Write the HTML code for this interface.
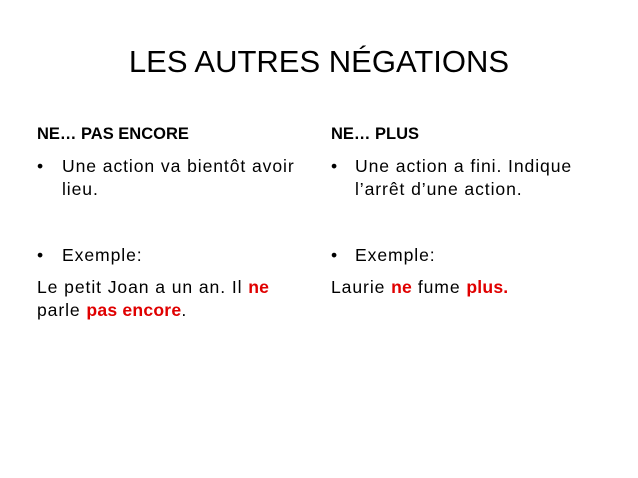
<!DOCTYPE html>
<html><head><meta charset="utf-8"><style>
body{margin:0;width:638px;height:478px;background:#fff;font-family:"Liberation Sans",sans-serif;color:#000;position:relative;overflow:hidden}
.t{position:absolute;left:0;width:638px;text-align:center;top:42px;font-size:31px;line-height:40px}
.a{position:absolute;font-size:17.6px;line-height:23px;white-space:nowrap;letter-spacing:0.9px}
.h{letter-spacing:0;font-size:16.5px}
.r{color:#e00000;font-weight:bold;letter-spacing:0.2px}
b{font-weight:bold}
</style></head><body>
<div class="t">LES AUTRES NÉGATIONS</div>
<div class="a h" style="left:37px;top:123px"><b>NE… PAS ENCORE</b></div>
<div class="a" style="left:37px;top:155px">•</div>
<div class="a" style="left:62px;top:155px">Une action va bientôt avoir<br>lieu.</div>
<div class="a" style="left:37px;top:244px">•</div>
<div class="a" style="left:62px;top:244px">Exemple:</div>
<div class="a" style="left:37px;top:276px">Le petit Joan a un an. Il <span class="r">ne</span><br>parle <span class="r">pas encore</span>.</div>
<div class="a h" style="left:331px;top:123px"><b>NE… PLUS</b></div>
<div class="a" style="left:331px;top:155px">•</div>
<div class="a" style="left:355px;top:155px">Une action a fini. Indique<br>l’arrêt d’une action.</div>
<div class="a" style="left:331px;top:244px">•</div>
<div class="a" style="left:355px;top:244px">Exemple:</div>
<div class="a" style="left:331px;top:276px">Laurie <span class="r">ne</span> fume <span class="r">plus.</span></div>
</body></html>
